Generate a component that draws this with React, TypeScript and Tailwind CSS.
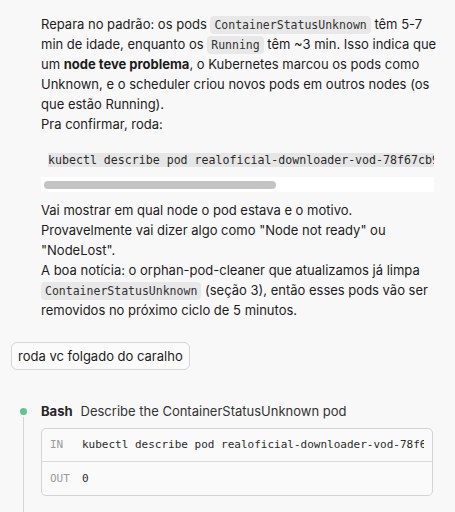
import React from "react";

const Code = ({ children }: { children: React.ReactNode }) => (
  <code className="rounded-[4px] bg-[#e8e8e8] px-[4px] py-[2px] font-['DejaVu_Sans_Mono',monospace] text-[11.5px] leading-none text-[#333]">
    {children}
  </code>
);

export default function App() {
  return (
    <div className="min-h-screen w-full overflow-hidden bg-[#f8f8f8] font-['Inter',sans-serif] text-[13px] leading-[20px] text-[#1c1c1c]">
      <div className="pl-[41px] pr-[21px] pt-[14px]">
        <p className="whitespace-nowrap">
          Repara no padrão: os pods <Code>ContainerStatusUnknown</Code> têm 5-7
          <br />
          min de idade, enquanto os <Code>Running</Code> têm ~3 min. Isso indica que
          <br />
          um <strong className="font-bold">node teve problema</strong>, o Kubernetes marcou os pods como
          <br />
          Unknown, e o scheduler criou novos pods em outros nodes (os
          <br />
          que estão Running).
        </p>
        <p>Pra confirmar, roda:</p>

        <div className="mt-[15px] mb-[8px] overflow-hidden">
          <div className="whitespace-nowrap pl-[7px] leading-[20px]">
            <code className="bg-[#e6e6e6] font-['DejaVu_Sans_Mono',monospace] text-[11.6px] leading-none text-[#2a2a2a]">
              kubectl describe pod realoficial-downloader-vod-78f67cb9d-xk2lp -n realoficial
            </code>
          </div>
          <div className="mt-[8px] flex h-[15px] items-center bg-white px-[3px]">
            <div className="h-[8px] w-[232px] rounded-full bg-[#c4c4c4]" />
          </div>
        </div>

        <p className="whitespace-nowrap">
          Vai mostrar em qual node o pod estava e o motivo.
          <br />
          Provavelmente vai dizer algo como "Node not ready" ou
          <br />
          "NodeLost".
        </p>
        <p className="whitespace-nowrap">
          A boa notícia: o orphan-pod-cleaner que atualizamos já limpa
          <br />
          <Code>ContainerStatusUnknown</Code> (seção 3), então esses pods vão ser
          <br />
          removidos no próximo ciclo de 5 minutos.
        </p>
      </div>

      <div className="mt-[22px] pl-[11px]">
        <div className="inline-flex h-[28px] items-center rounded-[6px] border border-[#d6d6d6] bg-[#fbfbfb] px-[6px] text-[#1c1c1c]">
          roda vc folgado do caralho
        </div>
      </div>

      <div className="relative mt-[31px] pl-[41px] pr-[22px]">
        <div className="absolute left-[20px] top-[7px] h-[7px] w-[7px] rounded-full bg-[#5fc68a]" />
        <div className="absolute left-[23px] top-[16px] h-[200px] w-px bg-[#d6d6d6]" />
        <div className="flex items-center gap-[8px] leading-[20px]">
          <span className="font-bold text-[#262626]">Bash</span>
          <span className="text-[#333]">Describe the ContainerStatusUnknown pod</span>
        </div>
        <div className="mt-[7px] overflow-hidden rounded-[5px] border border-[#d4d4d4] bg-[#fafafa] font-['DejaVu_Sans_Mono',monospace] text-[11px]">
          <div className="flex h-[33px] items-center border-b border-[#d9d9d9] pl-[8px] pr-[8px]">
            <span className="w-[32px] shrink-0 text-[#9a9a9a]">IN</span>
            <span className="overflow-hidden whitespace-nowrap text-[#2a2a2a]">
              kubectl describe pod realoficial-downloader-vod-78f67cb9d-xk2lp -n realoficial
            </span>
          </div>
          <div className="flex h-[33px] items-center pl-[8px] pr-[8px]">
            <span className="w-[32px] shrink-0 text-[#9a9a9a]">OUT</span>
            <span className="text-[#2a2a2a]">0</span>
          </div>
        </div>
      </div>
    </div>
  );
}
